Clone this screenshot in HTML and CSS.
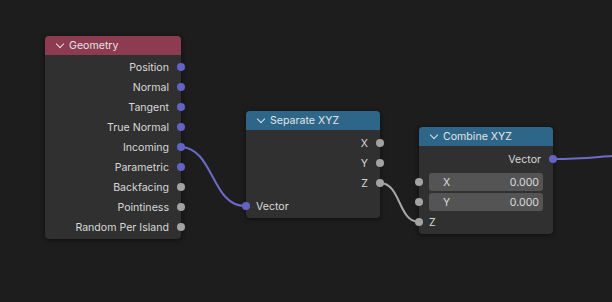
FILE: index.html
```html
<!DOCTYPE html>
<html>
<head>
<meta charset="utf-8">
<link rel="stylesheet" href="styles.css">
</head>
<body>
<div class="canvas">
  <svg class="links" width="612" height="302" viewBox="0 0 612 302">
    <path d="M180 147 C 214 147, 211 206, 245 206" class="link vec"/>
    <path d="M380 183 C 401 183, 398 222, 419 222" class="link gray"/>
    <path d="M553 159 C 580 159, 596 157, 612 156" class="link vec"/>
  </svg>

  <div class="node geo">
    <div class="hdr red"><span class="chev"></span>Geometry</div>
    <div class="body">
      <div class="row out">Position<i class="sock purple"></i></div>
      <div class="row out">Normal<i class="sock purple"></i></div>
      <div class="row out">Tangent<i class="sock purple"></i></div>
      <div class="row out">True Normal<i class="sock purple"></i></div>
      <div class="row out">Incoming<i class="sock purple"></i></div>
      <div class="row out">Parametric<i class="sock purple"></i></div>
      <div class="row out">Backfacing<i class="sock gray"></i></div>
      <div class="row out">Pointiness<i class="sock gray"></i></div>
      <div class="row out">Random Per Island<i class="sock gray"></i></div>
    </div>
  </div>

  <div class="node sep">
    <div class="hdr blue"><span class="chev"></span>Separate XYZ</div>
    <div class="body">
      <div class="row out">X<i class="sock gray"></i></div>
      <div class="row out">Y<i class="sock gray"></i></div>
      <div class="row out">Z<i class="sock gray"></i></div>
      <div class="row in gap">Vector<i class="sock purple"></i></div>
    </div>
  </div>

  <div class="node comb">
    <div class="hdr blue"><span class="chev"></span>Combine XYZ</div>
    <div class="body">
      <div class="row out">Vector<i class="sock purple"></i></div>
      <div class="row in gap"><div class="field"><span>X</span><span>0.000</span></div><i class="sock gray"></i></div>
      <div class="row in"><div class="field"><span>Y</span><span>0.000</span></div><i class="sock gray"></i></div>
      <div class="row in">Z<i class="sock gray"></i></div>
    </div>
  </div>
</div>
</body>
</html>
```
FILE: styles.css
```css
html, body {
  margin: 0;
  padding: 0;
  background: #1d1d1d;
}
.canvas {
  position: relative;
  width: 612px;
  height: 302px;
  overflow: hidden;
  background: #1d1d1d;
  font-family: Inter, "DejaVu Sans", sans-serif;
  font-size: 10.6px;
  color: #d8d8d8;
}
.links {
  position: absolute;
  left: 0;
  top: 0;
  z-index: 0;
}
.link {
  fill: none;
  stroke-width: 2;
}
.link.vec { stroke: #6c6cc8; }
.link.gray { stroke: #a8a8a8; }

.node {
  position: absolute;
  background: #303030;
  border-radius: 4px;
  box-shadow: 0 1px 5px rgba(0,0,0,0.55);
  z-index: 1;
}
.geo { left: 45px; top: 36px; width: 136px; }
.sep { left: 246px; top: 111px; width: 134px; }
.comb { left: 419px; top: 127px; width: 134px; }

.hdr {
  height: 19px;
  border-radius: 4px 4px 0 0;
  display: flex;
  align-items: center;
  padding-left: 12px;
  gap: 6px;
  color: #e4e4e4;
}
.red { background: #8c3b50; }
.blue { background: #2d6688; }
.chev {
  width: 5px;
  height: 5px;
  border-right: 1.5px solid #e0e0e0;
  border-bottom: 1.5px solid #e0e0e0;
  transform: translateY(-2px) rotate(45deg);
}

.body {
  padding: 2px 0 2px;
  display: flex;
  flex-direction: column;
}
.sep .body, .comb .body { padding-top: 3px; }
.row {
  position: relative;
  height: 20px;
  display: flex;
  align-items: center;
}
.row.out {
  justify-content: flex-end;
  padding-right: 12px;
}
.row.in {
  padding-left: 10px;
  padding-right: 10px;
}
.row.gap { margin-top: 3px; }
.sock {
  position: absolute;
  top: 6px;
  width: 8px;
  height: 8px;
  border-radius: 50%;
}
.row.out .sock { right: -4px; }
.row.in .sock { left: -4px; }
.sock.purple { background: #6363c6; }
.sock.gray { background: #a3a3a3; }

.field {
  flex: 1;
  height: 18px;
  background: #545454;
  border-radius: 3px;
  display: flex;
  align-items: center;
  justify-content: space-between;
  padding: 0 4px 0 14px;
  color: #dcdcdc;
}
```
